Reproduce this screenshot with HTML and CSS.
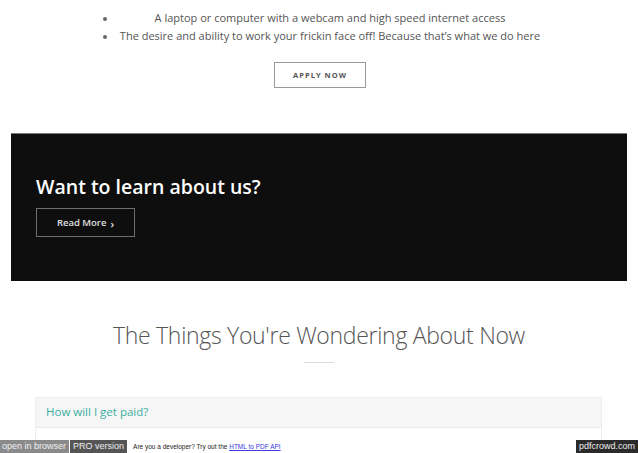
FILE: index.html
```html
<!DOCTYPE html>
<html>
<head>
<meta charset="utf-8">
<link rel="stylesheet" href="styles.css">
</head>
<body>
<div class="page">
  <section class="reqs">
    <ul class="req-list">
      <li>A laptop or computer with a webcam and high speed internet access</li>
      <li>The desire and ability to work your frickin face off! Because that’s what we do here</li>
    </ul>
    <div class="apply-wrap"><a class="apply-btn">APPLY NOW</a></div>
  </section>

  <section class="about">
    <h2 class="about-title">Want to learn about us?</h2>
    <a class="read-more">Read More <span class="chev">›</span></a>
  </section>

  <section class="faq">
    <h2 class="faq-title">The Things You're Wondering About Now</h2>
    <div class="faq-rule"></div>
    <div class="card">
      <div class="card-head">How will I get paid?</div>
      <div class="card-body"></div>
    </div>
  </section>
</div>

<div class="pdfbar">
  <div class="pdf-left">
    <span class="pb-open">open in browser</span><span class="pb-pro">PRO version</span><span class="pb-text">Are you a developer? Try out the <a class="pb-link">HTML to PDF API</a></span>
  </div>
  <span class="pb-brand">pdfcrowd.com</span>
</div>
</body>
</html>
```

FILE: styles.css
```css
html, body {
  margin: 0;
  padding: 0;
  background: #fff;
}
body {
  font-family: "Open Sans", "Liberation Sans", sans-serif;
  width: 638px;
  height: 453px;
  overflow: hidden;
  position: relative;
}
.page {
  display: flex;
  flex-direction: column;
}
.reqs {
  padding-top: 9px;
  display: flex;
  flex-direction: column;
}
.req-list {
  margin: 0 0 0 117px;
  width: 426px;
  padding: 0;
  list-style: disc outside;
  color: #555;
  font-size: 11px;
  line-height: 18px;
  text-align: center;
}
.req-list li::marker {
  color: #666;
  font-size: 10px;
}
.apply-wrap {
  display: flex;
  justify-content: center;
  margin-top: 17px;
  padding-left: 2px;
}
.apply-btn {
  box-sizing: border-box;
  width: 92px;
  height: 26px;
  border: 1px solid #9a9a9a;
  display: flex;
  align-items: center;
  justify-content: center;
  font-size: 7.5px;
  font-weight: 700;
  letter-spacing: 1px;
  color: #555;
}
.about {
  margin: 45px 11px 0 11px;
  height: 148px;
  box-sizing: border-box;
  background: #0e0e0e;
  border-top: 1px solid #777;
  padding: 39px 0 0 25px;
  display: flex;
  flex-direction: column;
  align-items: flex-start;
}
.about-title {
  margin: 0;
  color: #fff;
  font-size: 19.5px;
  font-weight: 600;
  line-height: 28px;
}
.read-more {
  margin-top: 7px;
  box-sizing: border-box;
  width: 99px;
  height: 29px;
  border: 1px solid #6f6f6f;
  display: flex;
  align-items: center;
  justify-content: center;
  color: #e0e0e0;
  font-size: 9.5px;
  font-weight: 600;
  gap: 4px;
}
.chev {
  font-size: 11px;
  line-height: 1;
  position: relative;
  top: 1px;
}
.faq {
  display: flex;
  flex-direction: column;
  align-items: center;
  padding-top: 38px;
}
.faq-title {
  margin: 0;
  font-size: 23px;
  font-weight: 300;
  color: #555;
  line-height: 32px;
  letter-spacing: -0.3px;
}
.faq-rule {
  width: 30px;
  height: 1px;
  background: #ddd;
  margin-top: 11px;
}
.card {
  align-self: flex-start;
  margin: 34px 0 0 35px;
  width: 567px;
  box-sizing: border-box;
  border: 1px solid #eee;
}
.card-head {
  height: 30px;
  box-sizing: border-box;
  background: #f6f6f6;
  border-bottom: 1px solid #eaeaea;
  padding: 0 0 2px 10px;
  display: flex;
  align-items: center;
  color: #3aaea2;
  font-size: 11.5px;
}
.card-body {
  height: 40px;
}
.pdfbar {
  position: absolute;
  left: 0;
  right: 0;
  bottom: 0;
  height: 13px;
  display: flex;
  justify-content: space-between;
  align-items: stretch;
  font-family: "Liberation Sans", Arial, sans-serif;
  font-size: 9px;
  line-height: 13px;
}
.pdf-left {
  display: flex;
  align-items: stretch;
}
.pb-open {
  background: #8a8a8a;
  color: #f2f2f2;
  padding: 0 3px 0 2px;
  white-space: nowrap;
}
.pb-pro {
  background: #555;
  color: #eee;
  margin-left: 1px;
  padding: 0 3px;
  white-space: nowrap;
}
.pb-text {
  background: #fff;
  color: #222;
  font-size: 6.5px;
  padding-left: 6px;
}
.pb-link {
  color: #3a3ae0;
  text-decoration: underline;
}
.pb-brand {
  background: #2a2a2a;
  color: #eee;
  padding: 0 3px;
  white-space: nowrap;
}
```
